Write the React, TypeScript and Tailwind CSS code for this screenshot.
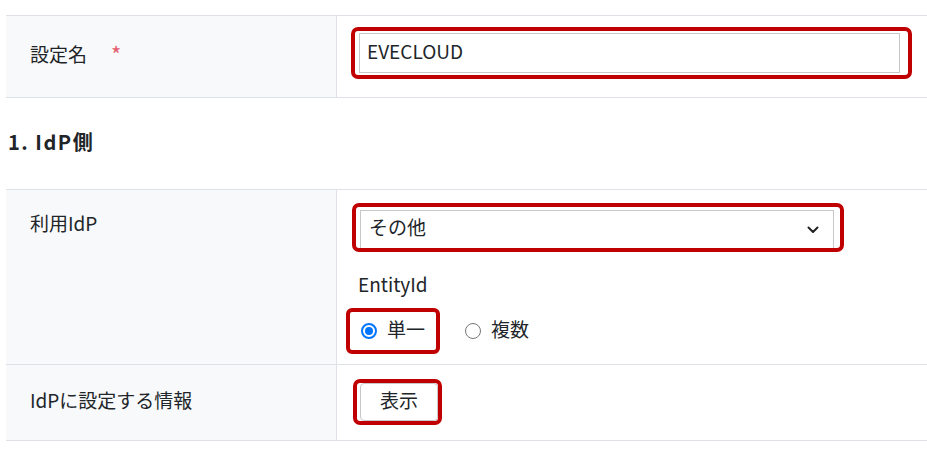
import React from "react";

const font = { fontFamily: '"Noto Sans CJK JP", "Noto Sans", sans-serif' };

function Radio({ checked }: { checked: boolean }) {
  return checked ? (
    <span className="flex h-[16px] w-[16px] items-center justify-center rounded-full border-2 border-[#0075ff] bg-white">
      <span className="h-[8px] w-[8px] rounded-full bg-[#0075ff]" />
    </span>
  ) : (
    <span className="h-[16px] w-[16px] rounded-full border-[1.5px] border-[#767676] bg-white" />
  );
}

export default function App() {
  return (
    <div
      className="min-h-[454px] w-[927px] bg-white pl-[6px] pt-[15px] text-[19px] leading-[27px] text-[#212529]"
      style={font}
    >
      {/* Row 1 */}
      <div className="grid h-[83px] grid-cols-[331px_1fr] border-y border-[#dee2e6]">
        <div className="flex items-center border-r border-[#dee2e6] bg-[#f8f9fa] pb-[6px] pl-[24px] text-[19px]">
          <span>設定名</span>
          <span className="ml-[24px] text-[22px] text-[#e35d6a]">*</span>
        </div>
        <div className="pl-[14px] pt-[11px]">
          <div className="w-[561px] rounded-[7px] border-4 border-[#c00000] py-[2px] pl-[4px] pr-[8px]">
            <div className="flex h-[40px] items-center border border-[#c8c8c8] pb-[5px] pl-[7px] text-[19px]">
              EVECLOUD
            </div>
          </div>
        </div>
      </div>

      {/* Heading */}
      <div className="flex h-[91px] items-center pb-[4px] pl-[2px] text-[20px] font-bold tracking-[1.5px]">
        1. IdP側
      </div>

      {/* Row 2 */}
      <div className="grid h-[176px] grid-cols-[331px_1fr] border-y border-[#dee2e6]">
        <div className="border-r border-[#dee2e6] bg-[#f8f9fa] pl-[24px] pt-[19px] text-[19px]">
          利用IdP
        </div>
        <div className="pl-[15px] pt-[13px]">
          <div className="w-[492px] rounded-[7px] border-4 border-[#c00000] pl-[4px] pr-[6px] pt-[3px]">
            <div className="flex h-[38px] items-center justify-between border border-b-0 border-[#c8c8c8] pl-[8px] pr-[14px] text-[19px]">
              <span className="pb-[6px]">その他</span>
              <svg width="12" height="8" viewBox="0 0 12 8" fill="none">
                <polyline
                  points="1.5,1.5 6,6 10.5,1.5"
                  stroke="#222"
                  strokeWidth="2"
                  strokeLinecap="round"
                  strokeLinejoin="round"
                />
              </svg>
            </div>
          </div>
          <div className="mt-[18px] pl-[6px] text-[19px] leading-[27px]">EntityId</div>
          <div className="mt-[11px] flex items-center text-[19px]">
            <div className="-ml-[6px] flex h-[46px] w-[94px] items-center gap-[10px] rounded-[6px] border-4 border-[#c00000] pl-[11px]">
              <Radio checked />
              <span className="pb-[6px]">単一</span>
            </div>
            <div className="ml-[25px] flex items-center gap-[10px]">
              <Radio checked={false} />
              <span className="pb-[6px]">複数</span>
            </div>
          </div>
        </div>
      </div>

      {/* Row 3 */}
      <div className="grid h-[76px] grid-cols-[331px_1fr] border-b border-[#dee2e6]">
        <div className="flex items-center border-r border-[#dee2e6] bg-[#f8f9fa] pb-[6px] pl-[24px] text-[19px]">
          IdPに設定する情報
        </div>
        <div className="pl-[16px] pt-[14px]">
          <div className="flex h-[46px] w-[89px] items-center rounded-[7px] border-4 border-[#c00000] pl-[3px]">
            <div className="flex h-[38px] w-[78px] items-center justify-center rounded-[4px] border border-[#c8c8c8] bg-white pb-[5px] text-[19px]">
              表示
            </div>
          </div>
        </div>
      </div>
    </div>
  );
}
